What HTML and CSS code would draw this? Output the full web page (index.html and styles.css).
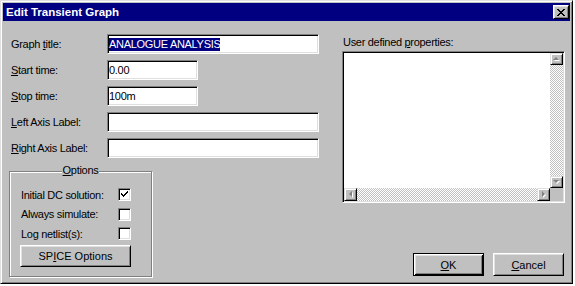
FILE: index.html
```html
<!DOCTYPE html>
<html lang="en">
<head>
    <meta charset="UTF-8">
    <title>Edit Transient Graph</title>
    <link rel="stylesheet" href="styles.css">
</head>
<body>
    <div class="window">
        <div class="titlebar">
            <span class="title">Edit Transient Graph</span>
            <button class="close">
                <svg width="8" height="7" viewBox="0 0 8 7" shape-rendering="crispEdges">
                    <path d="M0 0h2v1h1v1h2v-1h1v-1h2v1h-1v1h-1v1h-1v1h1v1h1v1h1v1h-2v-1h-1v-1h-2v1h-1v1h-2v-1h1v-1h1v-1h1v-1h-1v-1h-1v-1h-1z" fill="#000"/>
                </svg>
            </button>
        </div>
        <div class="content">
            <div class="left">
                <div class="form">
                    <div class="row">
                        <span>Graph <u>t</u>itle:</span>
                        <span class="field wide"><span class="sel">ANALOGUE ANALYSIS</span></span>
                    </div>
                    <div class="row">
                        <span><u>S</u>tart time:</span>
                        <span class="field short">0.00</span>
                    </div>
                    <div class="row">
                        <span><u>S</u>top time:</span>
                        <span class="field short">100m</span>
                    </div>
                    <div class="row">
                        <span><u>L</u>eft Axis Label:</span>
                        <span class="field wide"></span>
                    </div>
                    <div class="row">
                        <span><u>R</u>ight Axis Label:</span>
                        <span class="field wide"></span>
                    </div>
                </div>
                <div class="group">
                    <div class="legend"><span><u>O</u>ptions</span></div>
                    <div class="check-row">
                        <span>Initial DC solution:</span>
                        <span class="check">
                            <svg width="9" height="9" viewBox="0 0 9 9" shape-rendering="crispEdges">
                                <path d="M1 3h1v1h1v1h1v-1h1v-1h1v-1h1v-1h1v2h-1v1h-1v1h-1v1h-1v1h-1v-1h-1v-1h-1v-1h-1z" fill="#000"/>
                            </svg>
                        </span>
                    </div>
                    <div class="check-row">
                        <span>Always simulate:</span>
                        <span class="check"></span>
                    </div>
                    <div class="check-row">
                        <span>Log netlist(s):</span>
                        <span class="check"></span>
                    </div>
                    <button class="btn spice">SP<u>I</u>CE Options</button>
                </div>
            </div>
            <div class="right">
                <div class="props-label">User defined <u>p</u>roperties:</div>
                <div class="listbox">
                    <div class="list-area"></div>
                    <div class="vscroll">
                        <span class="arrow">
                            <svg width="7" height="4" viewBox="0 0 7 4"><path d="M1 4l3-3 3 3z" fill="#fff"/><path d="M0 3l3-3 3 3z" fill="#808080"/></svg>
                        </span>
                        <span class="track"></span>
                        <span class="arrow">
                            <svg width="7" height="4" viewBox="0 0 7 4"><path d="M1 1h6l-3 3z" fill="#fff"/><path d="M0 0h6l-3 3z" fill="#808080"/></svg>
                        </span>
                    </div>
                    <div class="hscroll">
                        <span class="arrow">
                            <svg width="4" height="7" viewBox="0 0 4 7"><path d="M4 1v6l-3-3z" fill="#fff"/><path d="M3 0v6l-3-3z" fill="#808080"/></svg>
                        </span>
                        <span class="track"></span>
                        <span class="arrow">
                            <svg width="4" height="7" viewBox="0 0 4 7"><path d="M1 1v6l3-3z" fill="#fff"/><path d="M0 0v6l3-3z" fill="#808080"/></svg>
                        </span>
                    </div>
                    <div class="corner"></div>
                </div>
                <div class="actions">
                    <button class="btn default"><u>O</u>K</button>
                    <button class="btn"><u>C</u>ancel</button>
                </div>
            </div>
        </div>
    </div>
</body>
</html>
```

FILE: styles.css
```css
body {
    margin: 0;
    background-color: #fff;
    font-family: "Liberation Sans", Arial, sans-serif;
    font-size: 11px;
    letter-spacing: -0.3px;
    color: #000;
}
u {
    text-decoration: underline;
    text-underline-offset: 1px;
}
.window {
    width: 573px;
    height: 284px;
    box-sizing: border-box;
    display: flex;
    flex-direction: column;
    background-color: #c0c0c0;
    border: 1px solid;
    border-color: #dfdfdf #000 #000 #dfdfdf;
    box-shadow: inset 1px 1px #fff, inset -1px -1px #808080;
    padding: 2px;
}
.titlebar {
    height: 18px;
    flex-shrink: 0;
    display: flex;
    align-items: center;
    justify-content: space-between;
    padding: 0 1px 0 3px;
    background-color: #000080;
    color: #fff;
}
.title {
    font-weight: bold;
    font-size: 11.5px;
    letter-spacing: 0;
}
.close {
    width: 16px;
    height: 14px;
    box-sizing: border-box;
    padding: 0;
    display: flex;
    align-items: center;
    justify-content: center;
    background-color: #c0c0c0;
    border: 1px solid;
    border-color: #fff #000 #000 #fff;
    box-shadow: inset 1px 1px #dfdfdf, inset -1px -1px #808080;
}
.content {
    flex: 1;
    display: flex;
    gap: 23px;
    padding: 13px 4px 4px 6px;
}
.left {
    width: 310px;
    display: flex;
    flex-direction: column;
}
.form {
    display: flex;
    flex-direction: column;
    gap: 6px;
    padding-left: 2px;
}
.row {
    display: grid;
    grid-template-columns: 96px auto;
    align-items: center;
    height: 20px;
}
.field {
    height: 20px;
    box-sizing: border-box;
    display: flex;
    align-items: center;
    padding: 0 1px;
    background-color: #fff;
    border: 1px solid;
    border-color: #808080 #fff #fff #808080;
    box-shadow: inset 1px 1px #000, inset -1px -1px #dfdfdf;
}
.wide {
    width: 212px;
}
.short {
    width: 91px;
}
.sel {
    background-color: #000080;
    color: #fff;
    line-height: 13px;
}
.group {
    position: relative;
    width: 143px;
    box-sizing: border-box;
    margin-top: 13px;
    padding: 16px 10px 9px 11px;
    display: flex;
    flex-direction: column;
    gap: 6.5px;
    border: 1px solid #808080;
    box-shadow: inset 1px 1px #fff, 1px 1px #fff;
}
.legend {
    position: absolute;
    top: -8px;
    left: 0;
    right: 0;
    text-align: center;
}
.legend span {
    background-color: #c0c0c0;
    padding: 0 1px;
}
.check-row {
    display: grid;
    grid-template-columns: 97px 13px;
    align-items: center;
    height: 13px;
}
.check {
    width: 13px;
    height: 13px;
    box-sizing: border-box;
    display: flex;
    align-items: center;
    justify-content: center;
    background-color: #fff;
    border: 1px solid;
    border-color: #808080 #fff #fff #808080;
    box-shadow: inset 1px 1px #000, inset -1px -1px #dfdfdf;
}
.btn {
    font: inherit;
    color: #000;
    padding: 0;
    background-color: #c0c0c0;
    border: 1px solid;
    border-color: #fff #000 #000 #fff;
    box-shadow: inset 1px 1px #dfdfdf, inset -1px -1px #808080;
}
.spice {
    width: 111px;
    height: 22px;
    margin: -1.5px 0 0 -1px;
}
.right {
    width: 224px;
    display: flex;
    flex-direction: column;
}
.props-label {
    height: 17px;
    line-height: 17px;
    padding-left: 1px;
}
.listbox {
    width: 223px;
    height: 152px;
    box-sizing: border-box;
    display: grid;
    grid-template-columns: 1fr 13px;
    grid-template-rows: 1fr 13px;
    background-color: #fff;
    border: 1px solid;
    border-color: #808080 #fff #fff #808080;
    box-shadow: inset 1px 1px #000, inset -1px -1px #dfdfdf;
    padding: 1px;
}
.vscroll,
.hscroll {
    display: flex;
    background: repeating-conic-gradient(#c0c0c0 0 25%, #fff 0 50%) 0 0 / 2px 2px;
}
.vscroll {
    flex-direction: column;
}
.track {
    flex: 1;
}
.arrow {
    width: 13px;
    height: 13px;
    box-sizing: border-box;
    display: flex;
    align-items: center;
    justify-content: center;
    background-color: #c0c0c0;
    border: 1px solid;
    border-color: #dfdfdf #000 #000 #dfdfdf;
    box-shadow: inset 1px 1px #fff, inset -1px -1px #808080;
}
.vscroll .arrow {
    height: 12px;
}
.corner {
    background-color: #c0c0c0;
}
.actions {
    margin-top: auto;
    margin-bottom: 1px;
    display: flex;
    justify-content: flex-end;
    gap: 9px;
    padding-right: 2px;
}
.actions .btn {
    width: 71px;
    height: 23px;
}
.default {
    border: 1px solid #000;
    box-shadow: inset 1px 1px #fff, inset -1px -1px #000, inset 2px 2px #dfdfdf, inset -2px -2px #808080;
}
```
